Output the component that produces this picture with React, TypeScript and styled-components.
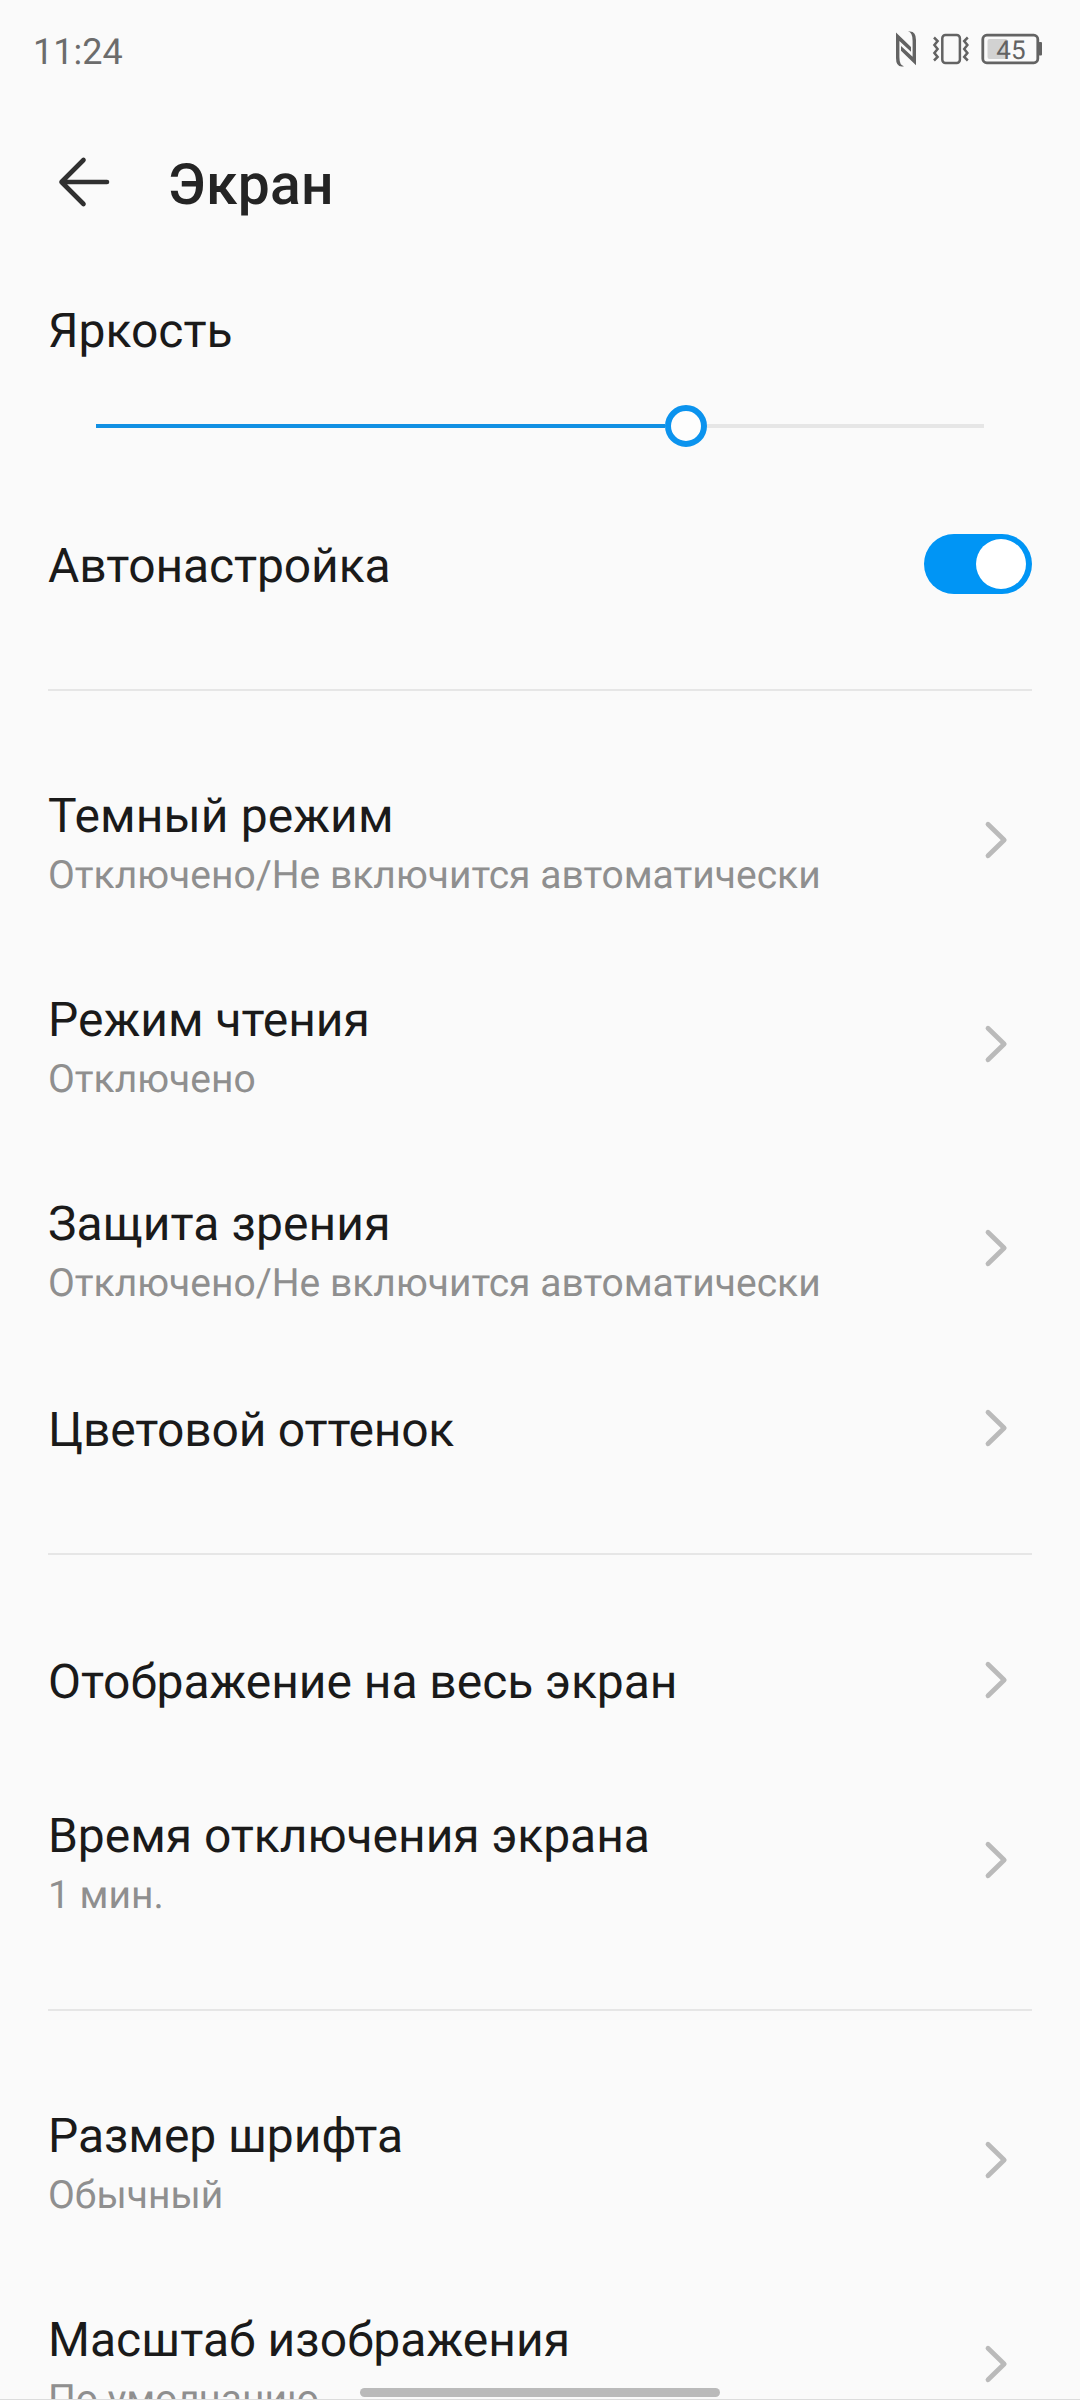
import React from 'react';
import styled, { createGlobalStyle } from 'styled-components';

const GlobalStyle = createGlobalStyle`
  * { box-sizing: border-box; }
  body {
    margin: 0;
    background: #fafafa;
    font-family: Roboto, "Noto Sans", sans-serif;
    text-rendering: geometricPrecision;
  }
`;

const Screen = styled.div`
  position: relative;
  display: flex;
  flex-direction: column;
  width: 1080px;
  height: 2400px;
  overflow: hidden;
  background: #fafafa;
  color: #1a1a1a;
`;

const StatusBar = styled.header`
  flex: none;
  display: flex;
  align-items: center;
  justify-content: space-between;
  height: 102px;
  padding: 0 36px 0 33px;
  color: #636363;
`;

const Clock = styled.time`
  padding-top: 1px;
  font-size: 36px;
  line-height: 42px;
  color: #6c6c6c;
`;

const StatusIcons = styled.div`
  display: flex;
  align-items: center;
  gap: 12px;
  margin-bottom: 4px;
  svg { display: block; }
`;

const AppBar = styled.div`
  flex: none;
  display: flex;
  align-items: center;
  gap: 54px;
  height: 162px;
  padding: 0 54px;
`;

const BackButton = styled.button`
  flex: none;
  width: 60px;
  height: 60px;
  margin-bottom: 2px;
  padding: 0;
  border: 0;
  background: none;
  color: #303030;
  svg { display: block; }
`;

const PageTitle = styled.h1`
  margin: 0;
  padding-top: 4px;
  font-size: 57px;
  line-height: 66px;
  font-weight: 500;
  letter-spacing: 0.3px;
  color: #242424;
`;

const Brightness = styled.section`
  flex: none;
  display: flex;
  flex-direction: column;
  height: 222px;
  padding: 39px 48px 0;
`;

const Label = styled.div<{ $tracking?: number }>`
  font-size: 48px;
  line-height: 56px;
  letter-spacing: ${p => p.$tracking ?? 0}px;
  white-space: nowrap;
`;

const Hint = styled.div`
  margin-top: 8px;
  font-size: 39px;
  line-height: 46px;
  color: #8f8f8f;
  white-space: nowrap;
`;

const Slider = styled.div`
  display: flex;
  align-items: center;
  height: 42px;
  margin: 46px 48px 0;
`;

const Track = styled.div<{ $active?: boolean }>`
  flex: ${p => (p.$active ? '0 0 auto' : '1')};
  width: ${p => (p.$active ? '569px' : 'auto')};
  height: 4px;
  background: ${p => (p.$active ? '#1190e3' : '#e6e6e6')};
`;

const Thumb = styled.div`
  flex: none;
  width: 42px;
  height: 42px;
  border: 6px solid #0b93ee;
  border-radius: 50%;
  background: #fdfdfd;
`;

const Row = styled.div<{ $tall?: boolean }>`
  flex: none;
  display: flex;
  align-items: center;
  justify-content: space-between;
  height: ${p => (p.$tall ? 204 : 156)}px;
  padding: 0 48px;
`;

const RowText = styled.div<{ $tall?: boolean }>`
  padding-top: ${p => (p.$tall ? 6 : 4)}px;
`;

const Switch = styled.div`
  display: flex;
  align-items: center;
  justify-content: flex-end;
  width: 108px;
  height: 60px;
  padding: 0 6px;
  border-radius: 30px;
  background: #0095f5;
`;

const Knob = styled.div`
  width: 50px;
  height: 50px;
  border-radius: 50%;
  background: #fff;
`;

const Chevron = styled.svg`
  flex: none;
  display: block;
  margin-right: 18px;
`;

const Divider = styled.hr`
  flex: none;
  width: 984px;
  height: 2px;
  margin: 47px 48px;
  border: 0;
  background: #e6e6e6;
`;

const NavHandle = styled.div`
  position: absolute;
  left: 360px;
  bottom: 3px;
  width: 360px;
  height: 9px;
  border-radius: 5px;
  background: #bababa;
`;

const BottomEdge = styled.div`
  position: absolute;
  left: 0;
  bottom: 0;
  width: 100%;
  height: 1px;
  background: #dcdcdc;
`;

const NfcIcon = () => (
  <svg width="26" height="38" viewBox="893 30 26 38" fill="currentColor">
    <path d="M896 32.5 L911 47 V51.8 L899.4 41 V57 Q899.4 65.5 904 66.2 Q896 68 896 58 Z" />
    <path d="M916 65.3 L901 50.8 V46 L912.6 56.8 V41 Q912.6 32.3 908 31.6 Q916 30 916 40 Z" />
  </svg>
);

const VibrateIcon = () => (
  <svg width="38" height="34" viewBox="931 32 38 34" fill="none" stroke="currentColor" strokeWidth="2.5">
    <rect x="942.3" y="35" width="17.6" height="28" rx="3.2" />
    <path d="M934 37.5 L937.6 41 L934.4 45 L937.6 49 L934.4 53 L937.6 57 L934 60.5" />
    <path d="M967.8 37.5 L964.2 41 L967.4 45 L964.2 49 L967.4 53 L964.2 57 L967.8 60.5" />
  </svg>
);

const BatteryIcon = ({ level }: { level: number }) => (
  <svg width="63" height="34" viewBox="981 32 63 34">
    <rect x="982.8" y="35.2" width="55" height="27.6" rx="4" fill="none" stroke="currentColor" strokeWidth="2.8" />
    <rect x="1038.5" y="42" width="3.5" height="13.5" rx="1" fill="currentColor" />
    <rect x="987.5" y="39" width={(level / 45) * 20} height="20" rx="2" fill="#d2d2d2" />
    <text x="996.3" y="58.8" fontSize="26" fill="currentColor">{level}</text>
  </svg>
);

const BackArrow = () => (
  <svg width="60" height="60" viewBox="54 152 60 60" fill="none" stroke="currentColor" strokeWidth="4.6" strokeLinecap="round" strokeLinejoin="round">
    <path d="M83.5 160 L61.5 182 L83.5 204 M61.5 182 H107" />
  </svg>
);

const ChevronRight = () => (
  <Chevron width="42" height="42" viewBox="972 819 42 42" fill="none" stroke="#bababa" strokeWidth="4.8" strokeLinecap="round" strokeLinejoin="round">
    <path d="M988 824.2 L1004.2 840 L988 855.8" />
  </Chevron>
);

type Item = { title: string; hint?: string; tracking?: number };

const groups: Item[][] = [
  [
    { title: 'Темный режим', hint: 'Отключено/Не включится автоматически', tracking: 0.1 },
    { title: 'Режим чтения', hint: 'Отключено' },
    { title: 'Защита зрения', hint: 'Отключено/Не включится автоматически', tracking: 0.1 },
    { title: 'Цветовой оттенок', tracking: -0.2 },
  ],
  [
    { title: 'Отображение на весь экран', tracking: -0.04 },
    { title: 'Время отключения экрана', hint: '1 мин.', tracking: -0.04 },
  ],
  [
    { title: 'Размер шрифта', hint: 'Обычный', tracking: -0.05 },
    { title: 'Масштаб изображения', hint: 'По умолчанию', tracking: 0.04 },
  ],
];

export default function App() {
  return (
    <>
      <GlobalStyle />
      <Screen>
        <StatusBar>
          <Clock>11:24</Clock>
          <StatusIcons>
            <NfcIcon />
            <VibrateIcon />
            <BatteryIcon level={45} />
          </StatusIcons>
        </StatusBar>
        <AppBar>
          <BackButton aria-label="Назад"><BackArrow /></BackButton>
          <PageTitle>Экран</PageTitle>
        </AppBar>
        <Brightness>
          <Label>Яркость</Label>
          <Slider>
            <Track $active />
            <Thumb />
            <Track />
          </Slider>
        </Brightness>
        <Row>
          <RowText><Label $tracking={-0.12}>Автонастройка</Label></RowText>
          <Switch><Knob /></Switch>
        </Row>
        {groups.map((items, i) => (
          <React.Fragment key={i}>
            <Divider />
            {items.map(({ title, hint, tracking }) => (
              <Row key={title} $tall={!!hint}>
                <RowText $tall={!!hint}>
                  <Label $tracking={tracking}>{title}</Label>
                  {hint && <Hint>{hint}</Hint>}
                </RowText>
                <ChevronRight />
              </Row>
            ))}
          </React.Fragment>
        ))}
        <NavHandle />
        <BottomEdge />
      </Screen>
    </>
  );
}
